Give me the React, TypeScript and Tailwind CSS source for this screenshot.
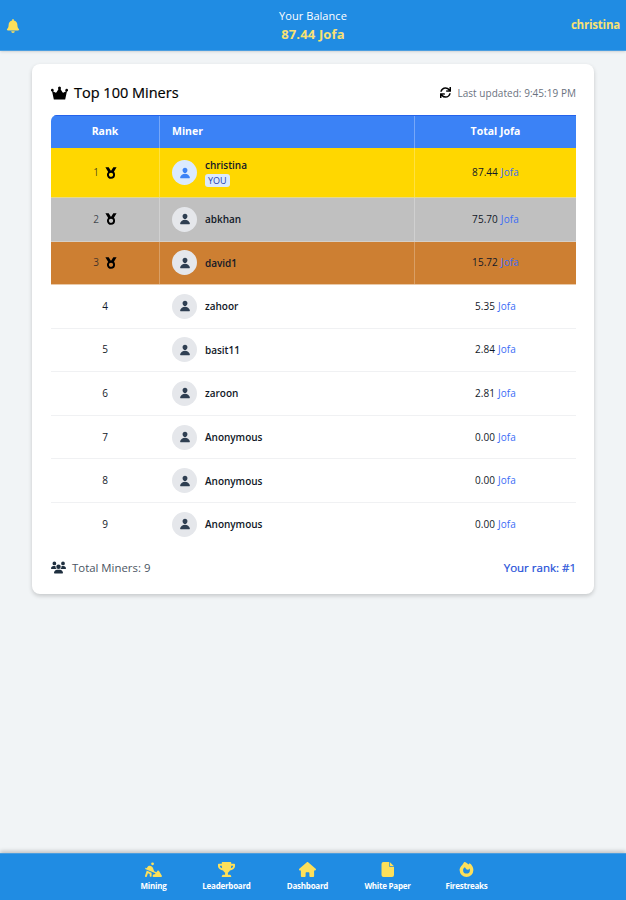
import React from "react";
import { FaBell, FaSync, FaTrophy } from "react-icons/fa";
import { FaPersonDigging, FaHouse, FaUsers } from "react-icons/fa6";
import { IoPerson } from "react-icons/io5";

type Miner = { rank: number; name: string; total: string; row: string; you?: boolean };
type IconProps = { className?: string };

const miners: Miner[] = [
  { rank: 1, name: "christina", total: "87.44", row: "h-[50px] bg-[#ffd700] border-[#e5d98a]", you: true },
  { rank: 2, name: "abkhan", total: "75.70", row: "h-[43.5px] bg-[#c0c0c0] border-[#d6cfc6]" },
  { rank: 3, name: "david1", total: "15.72", row: "h-[43.5px] bg-[#cd7f32] border-[#e9c9a8]" },
  { rank: 4, name: "zahoor", total: "5.35", row: "h-[43.6px] border-[#f0f1f3]" },
  { rank: 5, name: "basit11", total: "2.84", row: "h-[43.6px] border-[#f0f1f3]" },
  { rank: 6, name: "zaroon", total: "2.81", row: "h-[43.6px] border-[#f0f1f3]" },
  { rank: 7, name: "Anonymous", total: "0.00", row: "h-[43.6px] border-[#f0f1f3]" },
  { rank: 8, name: "Anonymous", total: "0.00", row: "h-[43.6px] border-[#f0f1f3]" },
  { rank: 9, name: "Anonymous", total: "0.00", row: "h-[43.6px] border-transparent" },
];

function CrownIcon({ className }: IconProps) {
  return (
    <svg viewBox="0 0 18 14" fill="currentColor" className={className}>
      <path d="M3 13.8 1 4.6 4.6 6.6Q5.6 6.9 6 6L8.2 2.4h1.6L12 6Q12.4 6.9 13.4 6.6L17 4.6 15 13.8Z" />
      <circle cx="1.4" cy="4" r="1.4" />
      <circle cx="9" cy="1.7" r="1.6" />
      <circle cx="16.6" cy="4" r="1.4" />
    </svg>
  );
}

function MedalIcon({ className }: IconProps) {
  return (
    <svg viewBox="0 0 12 12" className={className}>
      <path d="M0.4 0.3H3.7L6 3.9 8.3 0.3H11.6L8.8 5H3.2Z" fill="currentColor" />
      <circle cx="6" cy="7.8" r="3.1" fill="none" stroke="currentColor" strokeWidth="1.9" />
    </svg>
  );
}

function PaperIcon({ className }: IconProps) {
  return (
    <svg viewBox="0 0 17 17" fill="currentColor" className={className}>
      <path d="M4.5 1H10v3.5A1.5 1.5 0 0 0 11.5 6H15v8a2 2 0 0 1-2 2H4.5a2 2 0 0 1-2-2V3a2 2 0 0 1 2-2Z" />
      <path d="M10.7 1 15 5.3h-3.5a.8.8 0 0 1-.8-.8Z" />
    </svg>
  );
}

function StreakIcon({ className }: IconProps) {
  return (
    <svg viewBox="0 0 17 17" fill="currentColor" fillRule="evenodd" className={className}>
      <path d="M6.2.9C8.2 1.2 9.6 2.2 10.4 3.6L11.7 2.2C13.9 3.6 15.4 6.4 15.4 9a6.9 6.9 0 0 1-13.8 0C1.6 6 4.6 4 6.2.9ZM6.9 6.3C5.7 7 5.1 8.1 5.1 9.2a3.4 3.4 0 0 0 6.8 0c0-.6-.1-1.2-.4-1.7-.6 1-1.6 1.5-2.6 1.1C8.2 8.2 7.8 7.3 6.9 6.3Z" />
    </svg>
  );
}

const tabs = [
  { label: "Mining", Icon: FaPersonDigging, width: "w-[54px]" },
  { label: "Leaderboard", Icon: FaTrophy, width: "w-[92px]" },
  { label: "Dashboard", Icon: FaHouse, width: "w-[70px]" },
  { label: "White Paper", Icon: PaperIcon, width: "w-[90px]" },
  { label: "Firestreaks", Icon: StreakIcon, width: "w-[68px]" },
];

function MinerRow({ miner }: { miner: Miner }) {
  const divider = miner.rank <= 3 ? "border-white/25" : "border-transparent";
  return (
    <div className={`grid grid-cols-[109px_255px_161px] border-b text-[10px] text-[#111827] ${miner.row}`}>
      <div className={`flex items-center justify-center gap-[6px] border-r ${divider}`}>
        <span className={miner.rank <= 3 ? "text-[#111827]/75" : "font-medium"}>{miner.rank}</span>
        {miner.rank <= 3 && <MedalIcon className="size-[12px] text-black" />}
      </div>
      <div className={`flex items-center gap-[9px] border-r pl-3 ${divider}`}>
        <div className={`-mr-px flex size-[25px] items-center justify-center rounded-full ${miner.you ? "bg-[#dbeafe] text-[#3b82f6]" : "bg-[#e5e7eb] text-[#2f3f52]"}`}>
          <IoPerson className="size-[12px]" />
        </div>
        <div className="flex flex-col items-start font-semibold">
          <span className="leading-[14px] tracking-[-0.03px]">{miner.name}</span>
          {miner.you && (
            <span className="mt-[2px] h-[13px] rounded-[3px] bg-[#dbeafe] px-[3px] text-[9px] font-normal leading-[13px] text-[#1e40af]">YOU</span>
          )}
        </div>
      </div>
      <div className="flex items-center justify-center gap-[3px] font-medium">
        <span className="tracking-[0.05px]">{miner.total}</span>
        <span className="font-normal tracking-[0.1px] text-[#3b6cf6]">Jofa</span>
      </div>
    </div>
  );
}

export default function App() {
  return (
    <div className="flex h-[900px] w-[626px] flex-col bg-[#f1f4f6] font-['Open_Sans','Noto_Sans',sans-serif]">
      <header className="grid h-[51px] shrink-0 grid-cols-3 items-center border-b border-[#4b9ee0] bg-[#208ce3] px-[6px] shadow-sm">
        <FaBell className="mt-[2px] size-[14px] text-[#fde05a]" />
        <div className="flex flex-col items-center pt-[2px]">
          <span className="text-[11px] font-medium leading-[16px] tracking-[0.05px] text-white">Your Balance</span>
          <span className="text-[13px] font-bold leading-[21px] tracking-[0.15px] text-[#f8e173]">87.44 Jofa</span>
        </div>
        <span className="text-right text-[11.5px] font-bold tracking-[-0.2px] text-[#f8e173]">christina</span>
      </header>

      <main className="flex-1 px-8 pt-[13px]">
        <section className="h-[530px] w-[562px] rounded-lg bg-white px-[18px] pb-[18px] shadow-[0_2px_4px_rgba(0,0,0,0.18)]">
          <div className="flex h-[51px] items-center justify-between pt-[7px]">
            <h1 className="flex items-center gap-[6px] pl-px text-[14.5px] font-medium text-black [-webkit-text-stroke:0.2px_black]">
              <CrownIcon className="h-[14px] w-[17px]" />
              Top 100 Miners
            </h1>
            <div className="flex items-center gap-[6px] text-[10px] text-[#6b7280]">
              <FaSync className="mb-[2px] size-[11px] text-black" />
              <span className="tracking-[0.04px]">Last updated: 9:45:19 PM</span>
            </div>
          </div>
          <div className="ml-px w-[525px] overflow-hidden rounded-tl-[6px]">
            <div className="grid h-[33px] grid-cols-[109px_255px_161px] items-stretch border-t border-[#2563eb] bg-[#3b82f6] text-[10.5px] font-bold text-white">
              <div className="flex items-center justify-center border-r border-white/30">Rank</div>
              <div className="flex items-center border-r border-white/30 pl-3">Miner</div>
              <div className="flex items-center justify-center">Total Jofa</div>
            </div>
            {miners.map((miner) => (
              <MinerRow key={miner.rank} miner={miner} />
            ))}
          </div>
          <div className="flex h-[42px] items-center justify-between">
            <div className="flex items-center gap-[6px] pl-px text-[11.4px] text-[#4b5563]">
              <FaUsers className="size-[15px] text-[#1f2f3f]" />
              Total Miners: 9
            </div>
            <span className="text-[11.5px] font-medium leading-[16px] text-[#1d4ed8] [-webkit-text-stroke:0.2px_#1d4ed8]">Your rank: #1</span>
          </div>
        </section>
      </main>

      <nav className="flex h-[47px] shrink-0 justify-center border-t border-[#4b9ee0] bg-[#208ce3] pt-[7px] shadow-[0_-2px_4px_rgba(0,0,0,0.2)]">
        {tabs.map(({ label, Icon, width }) => (
          <div key={label} className={`flex flex-col items-center pl-px ${width}`}>
            <Icon className="size-[17px] text-[#fde05a]" />
            <span className="whitespace-nowrap text-[8px] font-bold leading-[16px] tracking-[-0.25px] text-white">{label}</span>
          </div>
        ))}
      </nav>
    </div>
  );
}
